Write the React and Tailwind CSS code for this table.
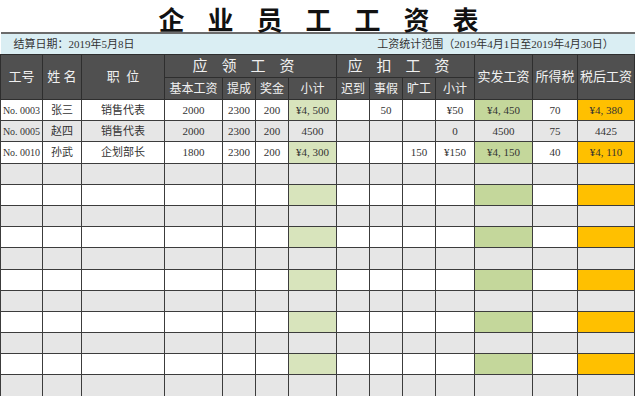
import React from 'react';

const widths = [42, 39, 83, 58, 33, 33, 48, 33, 33, 33, 39, 58, 45, 57];

const rows = [
    ['No. 0003', '张三', '销售代表', '2000', '2300', '200', '¥4, 500', '', '50', '', '¥50', '¥4, 450', '70', '¥4, 380'],
    ['No. 0005', '赵四', '销售代表', '2000', '2300', '200', '4500', '', '', '', '0', '4500', '75', '4425'],
    ['No. 0010', '孙武', '企划部长', '1800', '2300', '200', '¥4, 300', '', '', '150', '¥150', '¥4, 150', '40', '¥4, 110'],
];

const font = { fontFamily: '"Liberation Serif", "Noto Sans CJK SC", serif' };

const SalaryTable = () => {
    const allRows = [...rows];
    while (allRows.length < 15) allRows.push(Array(14).fill(''));

    const cellBg = (rowIdx, colIdx) => {
        if (rowIdx % 2 === 1) return 'bg-[#e6e6e6]';
        if (colIdx === 6) return 'bg-[#d8e4bc]';
        if (colIdx === 11) return 'bg-[#c4d79b]';
        if (colIdx === 13) return 'bg-[#ffc000]';
        return 'bg-white';
    };

    const th = 'bg-[#505050] text-[#f0f0f0] border border-[#2e2e2e] font-normal text-center align-middle p-0';

    return (
        <table className="table-fixed border-collapse w-[634px]" style={font}>
            <colgroup>
                {widths.map((w, i) => (
                    <col key={i} style={{ width: w }} />
                ))}
            </colgroup>
            <thead>
                <tr className="h-[21px]">
                    <td colSpan={14} className="bg-[#daeef3] border-t-2 border-[#6b6b6b] px-[13px] text-[11px] text-[#333]">
                        <div className="flex justify-between items-center">
                            <span>结算日期：2019年5月8日</span>
                            <span className="pr-[8px]">工资统计范围（2019年4月1日至2019年4月30日）</span>
                        </div>
                    </td>
                </tr>
                <tr className="h-[22px]">
                    <th rowSpan={2} className={`${th} text-[13px]`}>工号</th>
                    <th rowSpan={2} className={`${th} text-[13px]`}>姓&nbsp;名</th>
                    <th rowSpan={2} className={`${th} text-[13px]`}>职&nbsp;&nbsp;位</th>
                    <th colSpan={4} className={`${th} text-[15px] font-bold tracking-[14px]`}>应领工资</th>
                    <th colSpan={4} className={`${th} text-[15px] font-bold tracking-[14px]`}>应扣工资</th>
                    <th rowSpan={2} className={`${th} text-[13px]`}>实发工资</th>
                    <th rowSpan={2} className={`${th} text-[13px]`}>所得税</th>
                    <th rowSpan={2} className={`${th} text-[13px]`}>税后工资</th>
                </tr>
                <tr className="h-[22px]">
                    {['基本工资', '提成', '奖金', '小计', '迟到', '事假', '旷工', '小计'].map((t, i) => (
                        <th key={i} className={`${th} text-[12px]`}>{t}</th>
                    ))}
                </tr>
            </thead>
            <tbody>
                {allRows.map((r, ri) => (
                    <tr key={ri} className="h-[21.2px]">
                        {r.map((c, ci) => (
                            <td
                                key={ci}
                                className={`${cellBg(ri, ci)} border border-[#3c3c3c] text-center ${ci === 0 ? 'text-[10px]' : 'text-[11px]'} text-[#333] p-0 whitespace-nowrap overflow-hidden`}
                            >
                                {c}
                            </td>
                        ))}
                    </tr>
                ))}
            </tbody>
        </table>
    );
};

const App = () => {
    return (
        <div className="w-[640px] h-[396px] overflow-hidden bg-white">
            <div className="h-[32px] pt-[6px] text-center">
                <h1
                    className="text-[26px] font-bold text-[#111] tracking-[23px] leading-[26px] pl-[20px]"
                    style={{ fontFamily: '"Noto Sans CJK SC", serif' }}
                >
                    企业员工工资表
                </h1>
            </div>
            <SalaryTable />
        </div>
    );
};

export default App;
